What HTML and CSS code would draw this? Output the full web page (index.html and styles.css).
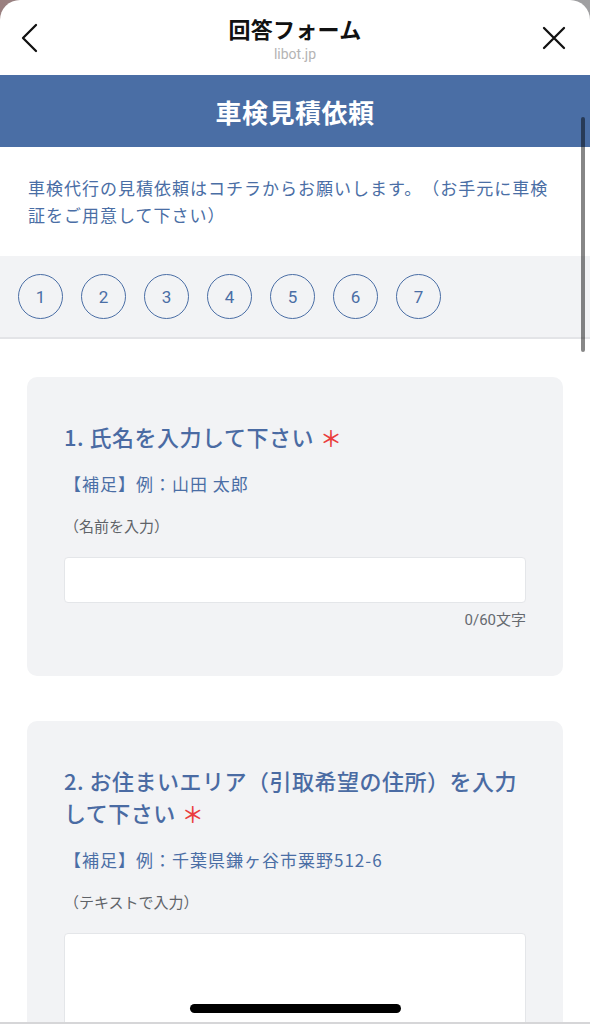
FILE: index.html
```html
<!DOCTYPE html>
<html lang="ja">
<head>
<meta charset="utf-8">
<title>回答フォーム</title>
<link rel="stylesheet" href="styles.css">
</head>
<body>
<div class="phone">
  <div class="sheet">
    <header class="topbar">
      <div class="topbar-left">
        <svg class="icon-back" width="20" height="30" viewBox="0 0 20 30"><path d="M17 2 L4 15 L17 28" fill="none" stroke="#111" stroke-width="2.3" stroke-linecap="round" stroke-linejoin="round"/></svg>
      </div>
      <div class="topbar-title">
        <div class="topbar-name">回答フォーム</div>
        <div class="topbar-domain">libot.jp</div>
      </div>
      <div class="topbar-right">
        <svg class="icon-close" width="24" height="24" viewBox="0 0 24 24"><path d="M2 2 L22 22 M22 2 L2 22" fill="none" stroke="#111" stroke-width="2.3" stroke-linecap="round"/></svg>
      </div>
    </header>

    <div class="banner">車検見積依頼</div>

    <p class="desc">車検代行の見積依頼はコチラからお願いします。（お手元に車検証をご用意して下さい）</p>

    <nav class="steps">
      <span class="step">1</span>
      <span class="step">2</span>
      <span class="step">3</span>
      <span class="step">4</span>
      <span class="step">5</span>
      <span class="step">6</span>
      <span class="step">7</span>
    </nav>

    <main class="form">
      <section class="card">
        <h2 class="q-title">1. 氏名を入力して下さい<span class="req">＊</span></h2>
        <p class="q-note">【補足】例：山田 太郎</p>
        <p class="q-hint">（名前を入力）</p>
        <div class="field"></div>
        <div class="counter">0/60文字</div>
      </section>

      <section class="card">
        <h2 class="q-title">2. お住まいエリア（引取希望の住所）を入力して下さい<span class="req">＊</span></h2>
        <p class="q-note">【補足】例：千葉県鎌ヶ谷市粟野512-6</p>
        <p class="q-hint">（テキストで入力）</p>
        <div class="field field-area"></div>
      </section>
    </main>
  </div>

  <div class="scrollbar"></div>
  <div class="home-indicator"></div>
  <div class="screen-edge"></div>
</div>
</body>
</html>
```

FILE: styles.css
```css
* {
  box-sizing: border-box;
}

html, body {
  margin: 0;
  padding: 0;
}

body {
  font-family: "Noto Sans CJK JP", "Noto Sans", sans-serif;
  background: #8d8d8f;
  text-spacing-trim: space-all;
}

.phone {
  position: relative;
  width: 590px;
  height: 1024px;
  overflow: hidden;
  background: linear-gradient(90deg, #9a7f7f 0%, #8f8f91 20%, #8f8f91 80%, #a0a0a2 100%);
}

.sheet {
  background: #ffffff;
  border-radius: 20px 20px 0 0;
  min-height: 1024px;
}

/* top bar */
.topbar {
  height: 75px;
  display: grid;
  grid-template-columns: 1fr auto 1fr;
}

.topbar-left {
  padding: 23px 0 0 19px;
}

.topbar-right {
  padding: 26px 24px 0 0;
  justify-self: end;
}

.icon-back, .icon-close {
  display: block;
}

.topbar-title {
  padding-top: 13px;
  text-align: center;
}

.topbar-name {
  font-size: 22px;
  line-height: 30px;
  font-weight: 700;
  color: #111;
  letter-spacing: 0.3px;
}

.topbar-domain {
  margin-top: 2px;
  font-family: Roboto, "Noto Sans", sans-serif;
  font-size: 14px;
  line-height: 18px;
  color: #b4b4b4;
}

/* banner */
.banner {
  height: 72px;
  background: #4a6ea5;
  color: #ffffff;
  font-size: 26px;
  font-weight: 700;
  display: flex;
  align-items: center;
  justify-content: center;
  letter-spacing: 0.5px;
}

/* description */
.desc {
  margin: 0;
  padding: 27px 28px 28px;
  font-size: 17px;
  letter-spacing: 1px;
  line-height: 27px;
  color: #4a6ea5;
}

/* steps */
.steps {
  display: flex;
  gap: 18px;
  padding: 18px 18px;
  background: #f2f3f5;
  border-bottom: 2px solid #e3e4e7;
}

.step {
  width: 45px;
  height: 45px;
  border: 1.6px solid #4a6ea5;
  border-radius: 50%;
  display: flex;
  align-items: center;
  justify-content: center;
  font-family: Roboto, "Noto Sans", sans-serif;
  font-size: 17px;
  color: #4a6ea5;
}

/* form */
.form {
  padding: 38px 27px;
  display: flex;
  flex-direction: column;
  gap: 45px;
}

.card {
  background: #f2f3f5;
  border-radius: 10px;
  padding: 43px 37px 46px;
}

.q-title {
  margin: 0;
  font-size: 22px;
  line-height: 32px;
  letter-spacing: 0.5px;
  font-weight: 500;
  color: #4a6ba3;
}

.req {
  display: inline-block;
  color: #ea3d3d;
  margin-left: 6px;
  letter-spacing: 0;
}

.q-note {
  margin: 20px 0 0;
  font-size: 17px;
  letter-spacing: 1px;
  line-height: 24px;
  color: #4a6ea5;
}

.q-hint {
  margin: 19px 0 0;
  font-size: 15px;
  line-height: 22px;
  color: #5f6368;
}

.field {
  margin-top: 20px;
  height: 46px;
  background: #ffffff;
  border: 1px solid #e4e6e9;
  border-radius: 4px;
}

.field-area {
  height: 140px;
}

.counter {
  margin-top: 7px;
  text-align: right;
  font-family: Roboto, "Noto Sans CJK JP", sans-serif;
  font-size: 15px;
  line-height: 20px;
  color: #666a70;
}

/* overlays */
.scrollbar {
  position: absolute;
  left: 581px;
  top: 117px;
  width: 4px;
  height: 235px;
  border-radius: 2px;
  background: rgba(0, 0, 0, 0.47);
}

.home-indicator {
  position: absolute;
  left: 190px;
  top: 1004px;
  width: 211px;
  height: 9px;
  border-radius: 5px;
  background: #000;
}

.screen-edge {
  position: absolute;
  left: 0;
  right: 0;
  bottom: 0;
  height: 2px;
  background: #d6d6d8;
}
```
